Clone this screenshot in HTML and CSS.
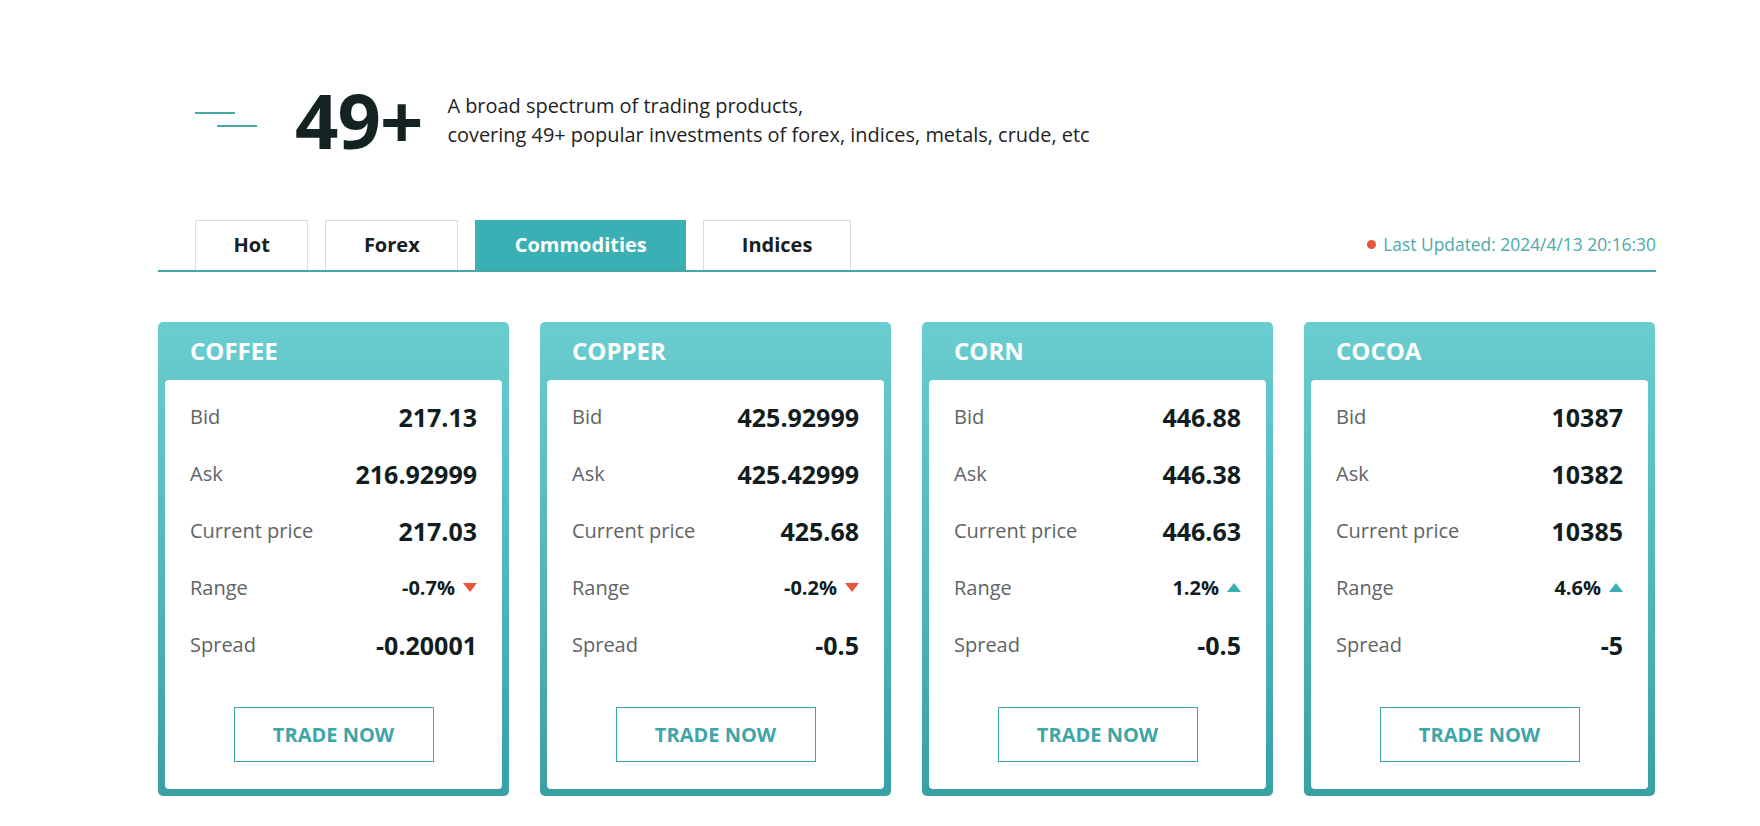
FILE: index.html
```html
<!DOCTYPE html>
<html lang="en">
<head>
<meta charset="utf-8">
<title>Trading products</title>
<link rel="stylesheet" href="styles.css">
</head>
<body>
<main class="wrap">
  <section class="hero">
    <svg class="hero-icon" width="62" height="16" viewBox="0 0 62 16" aria-hidden="true">
      <rect x="0" y="0" width="40" height="2" fill="#4aa8a6"/>
      <rect x="22" y="13" width="40" height="2" fill="#4aa8a6"/>
    </svg>
    <div class="hero-num">49+</div>
    <p class="hero-text">A broad spectrum of trading products,<br>covering 49+ popular investments of forex, indices, metals, crude, etc</p>
  </section>

  <nav class="tabbar">
    <div class="tabs">
      <div class="tab">Hot</div>
      <div class="tab">Forex</div>
      <div class="tab tab-active">Commodities</div>
      <div class="tab">Indices</div>
    </div>
    <div class="updated"><span class="dot"></span>Last Updated: 2024/4/13 20:16:30</div>
  </nav>

  <section class="cards">
    <article class="card">
      <h3 class="card-title">COFFEE</h3>
      <div class="card-body">
        <div class="row"><span class="label">Bid</span><span class="value">217.13</span></div>
        <div class="row"><span class="label">Ask</span><span class="value">216.92999</span></div>
        <div class="row"><span class="label">Current price</span><span class="value">217.03</span></div>
        <div class="row"><span class="label">Range</span><span class="range">-0.7%<i class="tri tri-down"></i></span></div>
        <div class="row"><span class="label">Spread</span><span class="value">-0.20001</span></div>
        <div class="btn">TRADE NOW</div>
      </div>
    </article>
    <article class="card">
      <h3 class="card-title">COPPER</h3>
      <div class="card-body">
        <div class="row"><span class="label">Bid</span><span class="value">425.92999</span></div>
        <div class="row"><span class="label">Ask</span><span class="value">425.42999</span></div>
        <div class="row"><span class="label">Current price</span><span class="value">425.68</span></div>
        <div class="row"><span class="label">Range</span><span class="range">-0.2%<i class="tri tri-down"></i></span></div>
        <div class="row"><span class="label">Spread</span><span class="value">-0.5</span></div>
        <div class="btn">TRADE NOW</div>
      </div>
    </article>
    <article class="card">
      <h3 class="card-title">CORN</h3>
      <div class="card-body">
        <div class="row"><span class="label">Bid</span><span class="value">446.88</span></div>
        <div class="row"><span class="label">Ask</span><span class="value">446.38</span></div>
        <div class="row"><span class="label">Current price</span><span class="value">446.63</span></div>
        <div class="row"><span class="label">Range</span><span class="range">1.2%<i class="tri tri-up"></i></span></div>
        <div class="row"><span class="label">Spread</span><span class="value">-0.5</span></div>
        <div class="btn">TRADE NOW</div>
      </div>
    </article>
    <article class="card">
      <h3 class="card-title">COCOA</h3>
      <div class="card-body">
        <div class="row"><span class="label">Bid</span><span class="value">10387</span></div>
        <div class="row"><span class="label">Ask</span><span class="value">10382</span></div>
        <div class="row"><span class="label">Current price</span><span class="value">10385</span></div>
        <div class="row"><span class="label">Range</span><span class="range">4.6%<i class="tri tri-up"></i></span></div>
        <div class="row"><span class="label">Spread</span><span class="value">-5</span></div>
        <div class="btn">TRADE NOW</div>
      </div>
    </article>
  </section>
</main>
</body>
</html>
```

FILE: styles.css
```css
* { box-sizing: border-box; }
html, body { margin: 0; padding: 0; background: #fff; }
body {
  font-family: "Open Sans", "Noto Sans", "DejaVu Sans", sans-serif;
  color: #1b2528;
}
.wrap {
  width: 1498px;
  margin-left: 158px;
  padding-top: 80px;
}
.hero {
  display: flex;
  align-items: center;
  height: 80px;
  padding-left: 37px;
}
.hero-icon { display: block; margin-top: -1px; }
.hero-num {
  font-size: 76px;
  font-weight: 700;
  line-height: 80px;
  color: #122322;
  margin-left: 38px;
  letter-spacing: -1px;
}
.hero-text {
  margin: 0 0 0 25px;
  font-size: 19.95px;
  line-height: 29px;
  color: #222;
}
.tabbar {
  margin-top: 60px;
  display: flex;
  justify-content: space-between;
  align-items: center;
  border-bottom: 2px solid #45a7a6;
}
.tabs {
  display: flex;
  gap: 17px;
  padding-left: 37px;
  align-items: flex-end;
}
.tab {
  height: 50px;
  padding: 0 37.5px;
  border: 1px solid #dcdcdc;
  border-bottom: none;
  background: #fff;
  font-size: 20px;
  font-weight: 700;
  line-height: 48px;
  color: #172022;
}
.tab-active {
  background: #3aafb4;
  border-color: #3aafb4;
  padding: 0 38.5px;
  color: #fff;
}
.updated {
  display: flex;
  align-items: center;
  font-size: 17.4px;
  color: #4ea9a8;
  padding-bottom: 2px;
}
.dot {
  width: 9px;
  height: 9px;
  border-radius: 50%;
  background: #e8553a;
  margin-right: 7px;
}
.cards {
  margin-top: 50px;
  display: grid;
  grid-template-columns: repeat(4, 351px);
  gap: 31px;
}
.card {
  height: 474px;
  border-radius: 5px;
  background: linear-gradient(to bottom, #6acdd0 0%, #52b8bc 50%, #38a1a5 100%);
  padding: 0 7px 7px;
  display: flex;
  flex-direction: column;
}
.card-title {
  margin: 0;
  height: 58px;
  line-height: 58px;
  padding-left: 25px;
  font-size: 24px;
  font-weight: 700;
  color: #fff;
}
.card-body {
  flex: 1;
  background: #fff;
  border-radius: 4px;
  padding: 8px 25px 27px;
  display: flex;
  flex-direction: column;
}
.row {
  height: 57px;
  display: flex;
  justify-content: space-between;
  align-items: center;
}
.label {
  font-size: 20px;
  color: #5e6466;
}
.value {
  font-size: 25px;
  font-weight: 700;
  color: #121d20;
}
.range {
  display: flex;
  align-items: center;
  font-size: 20px;
  font-weight: 700;
  color: #121d20;
}
.tri {
  display: inline-block;
  width: 0;
  height: 0;
  margin-left: 8px;
  border-left: 7px solid transparent;
  border-right: 7px solid transparent;
}
.tri-down { border-top: 9px solid #e8553a; }
.tri-up { border-bottom: 9px solid #3aafaf; }
.btn {
  margin: 34px auto 0;
  width: 200px;
  height: 55px;
  border: 1px solid #3ea6a8;
  color: #3ea6a8;
  font-size: 20px;
  font-weight: 700;
  display: flex;
  align-items: center;
  justify-content: center;
}
```
